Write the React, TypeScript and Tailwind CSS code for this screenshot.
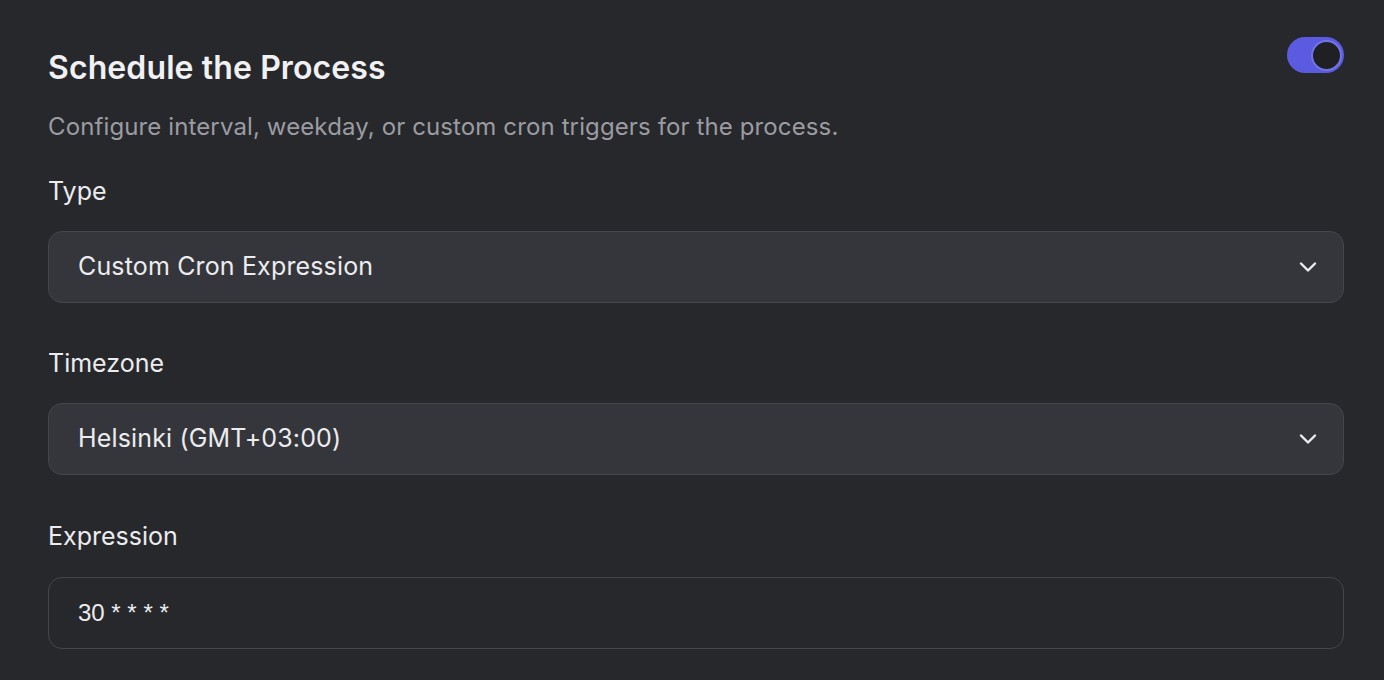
import { ChevronDown } from "lucide-react";

function Label({ children }: { children: React.ReactNode }) {
  return <div className="text-[25px] leading-[30px] text-[#ececee]">{children}</div>;
}

function SelectBox({ value }: { value: string }) {
  return (
    <div className="mt-[25px] flex h-[72px] items-center justify-between rounded-[14px] border border-[#45464b] bg-[#35363b] pl-[29px] pr-[21px]">
      <span className="text-[25px] tracking-[0.15px] text-[#ececee]">{value}</span>
      <ChevronDown className="h-[28px] w-[28px] text-[#ececee]" strokeWidth={2.1} />
    </div>
  );
}

export default function App() {
  return (
    <div
      className="min-h-[680px] bg-[#27282c] pl-[48px] pr-[40px] pt-[37px] pb-[40px] text-white"
      style={{ fontFamily: "Inter, 'Noto Sans', sans-serif" }}
    >
      <div className="flex items-start justify-between">
        <h1 className="mt-[13px] text-[32px] font-semibold leading-[36px] tracking-[0.1px] text-[#f1f1f3]">
          Schedule the Process
        </h1>
        <button
          type="button"
          className="flex h-[36px] w-[57px] items-center justify-end rounded-full bg-[#5b5be2] pr-[2px]"
        >
          <span className="h-[31px] w-[31px] rounded-full border-2 border-[#7373e6] bg-[#1f2024]" />
        </button>
      </div>

      <p className="mt-[26px] text-[24px] leading-[30px] tracking-[0.12px] text-[#9b9ca1]">
        Configure interval, weekday, or custom cron triggers for the process.
      </p>

      <div className="mt-[34px]">
        <Label>Type</Label>
        <SelectBox value="Custom Cron Expression" />
      </div>

      <div className="mt-[45px]">
        <Label>Timezone</Label>
        <SelectBox value="Helsinki (GMT+03:00)" />
      </div>

      <div className="mt-[46px]">
        <Label>Expression</Label>
        <div className="mt-[26px] flex h-[72px] items-center rounded-[14px] border border-[#45464b] bg-[#27282c] px-[29px]">
          <span
            className="text-[24px] text-[#ececee]"
            style={{ fontFamily: "'Liberation Sans', Arial, sans-serif" }}
          >
            30 * * * *
          </span>
        </div>
      </div>
    </div>
  );
}
